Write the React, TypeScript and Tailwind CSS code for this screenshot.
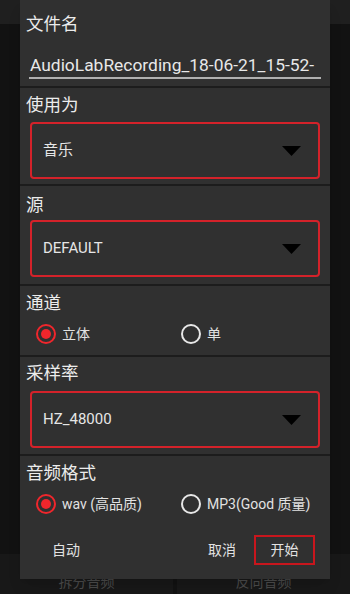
import React from 'react';

const font = { fontFamily: 'Roboto, "Noto Sans CJK SC", sans-serif' };

const Label: React.FC<{ text: string }> = ({ text }) => (
  <div className="pl-[6px] text-[17.5px] leading-[24px] text-[#ececec]">{text}</div>
);

const SelectBox: React.FC<{ value: string }> = ({ value }) => (
  <div className="mx-[10px] h-[57px] rounded-[4px] border-2 border-[#d4222a] flex items-center justify-between pl-[11px] pr-[17px]">
    <span className="text-[15px] text-[#e6e6e6]">{value}</span>
    <svg width="19" height="10" viewBox="0 0 19 10">
      <polygon points="0,0 19,0 9.5,10" fill="#000" />
    </svg>
  </div>
);

const Radio: React.FC<{ checked?: boolean; label: string }> = ({ checked, label }) => (
  <div className="flex items-center gap-[6px]">
    <div
      className={
        checked
          ? 'w-[20px] h-[20px] rounded-full border-2 border-[#f0262c] flex items-center justify-center'
          : 'w-[20px] h-[20px] rounded-full border-2 border-[#e8e8e8] flex items-center justify-center'
      }
    >
      {checked && <div className="w-[10px] h-[10px] rounded-full bg-[#f0262c]" />}
    </div>
    <span className="text-[14px] text-[#e2e2e2]">{label}</span>
  </div>
);

export default function App() {
  return (
    <div className="relative w-[350px] h-[594px] overflow-hidden bg-[#121212]" style={font}>
      {/* app behind the dialog */}
      <div className="h-[24px] bg-[#1f1f1f]" />
      <div className="absolute left-0 right-0 bottom-0 h-[40px] flex gap-[4px]">
        <div className="flex-1 bg-[#181818] flex items-end justify-center pb-[1px]">
          <span className="text-[14px] text-[#4a4a4a]">拆分音频</span>
        </div>
        <div className="flex-1 bg-[#181818] flex items-end justify-center pb-[1px]">
          <span className="text-[14px] text-[#4a4a4a]">反向音频</span>
        </div>
      </div>

      {/* dialog */}
      <div className="absolute left-[20px] top-0 w-[310px] h-[579px] bg-[#303030] shadow-lg flex flex-col">
        <div className="h-[86px] pt-[12px]">
          <Label text="文件名" />
          <div className="mx-[9px] mt-[17px] h-[26px] border-b-2 border-[#b0b0b0] whitespace-nowrap text-[17.4px] leading-[24px] text-[#e8e8e8] pl-[1px]">
            AudioLabRecording_18-06-21_15-52-
          </div>
        </div>

        <div className="border-t-2 border-[#1c1c1c] pt-[5px] pb-[5px]">
          <Label text="使用为" />
          <div className="mt-[5px]">
            <SelectBox value="音乐" />
          </div>
        </div>

        <div className="border-t-2 border-[#1c1c1c] pt-[7px] pb-[7px]">
          <Label text="源" />
          <div className="mt-[3px]">
            <SelectBox value="DEFAULT" />
          </div>
        </div>

        <div className="border-t-2 border-[#1c1c1c] pt-[5px] pb-[5px]">
          <Label text="通道" />
          <div className="mt-[3px] h-[32px] grid grid-cols-2 pl-[16px] pr-[4px] items-center">
            <Radio checked label="立体" />
            <Radio label="单" />
          </div>
        </div>

        <div className="border-t-2 border-[#1c1c1c] pt-[4px] pb-[6px]">
          <Label text="采样率" />
          <div className="mt-[6px]">
            <SelectBox value="HZ_48000" />
          </div>
        </div>

        <div className="border-t-2 border-[#1c1c1c] pt-[5px] flex-1">
          <Label text="音频格式" />
          <div className="mt-[3px] h-[32px] grid grid-cols-2 pl-[16px] pr-[4px] items-center">
            <Radio checked label="wav (高品质)" />
            <Radio label="MP3(Good 质量)" />
          </div>
          <div className="mt-[15px] flex items-center justify-between pl-[16px] pr-[15px]">
            <button className="px-[16px] h-[30px] text-[14px] text-[#e2e2e2]">自动</button>
            <div className="flex items-center gap-[2px]">
              <button className="px-[16px] h-[30px] text-[14px] text-[#e2e2e2]">取消</button>
              <button className="w-[61px] h-[30px] border-2 border-[#c8161d] text-[14px] text-[#e2e2e2]">
                开始
              </button>
            </div>
          </div>
        </div>
      </div>
    </div>
  );
}
